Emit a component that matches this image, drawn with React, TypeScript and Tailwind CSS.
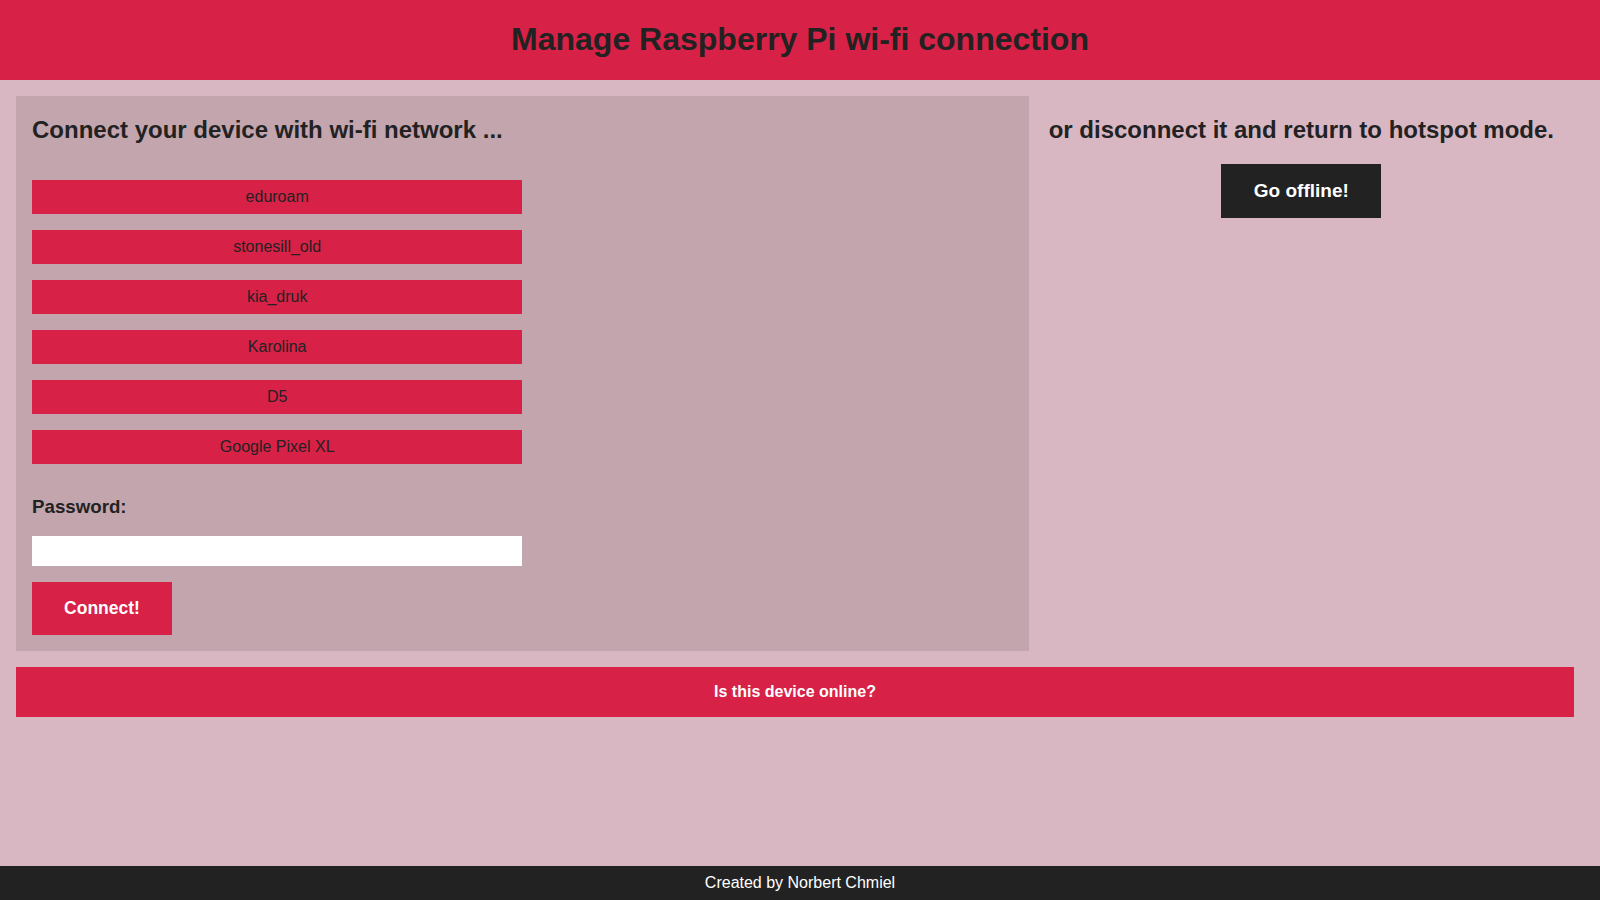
const networks = ['eduroam', 'stonesill_old', 'kia_druk', 'Karolina', 'D5', 'Google Pixel XL']

const App = () => {
    return (
        <div className="flex min-h-screen flex-col bg-[#d9b7c2] font-['Liberation_Sans',Arial,sans-serif] text-[#222222]">
            <header className="flex h-20 items-center justify-center bg-[#d72147] pb-[2px]">
                <h1 className="text-[32px] font-bold leading-none">
                    Manage Raspberry Pi wi-fi connection
                </h1>
            </header>

            <main className="pl-4 pr-[26px] pt-4">
                <div className="flex">
                    <section className="w-[65%] bg-[#c3a5ae] px-4 pb-4 pt-4">
                        <h2 className="text-2xl font-bold leading-[36px]">
                            Connect your device with wi-fi network ...
                        </h2>
                        <div className="mt-8 flex w-1/2 flex-col gap-4">
                            {networks.map((name) => (
                                <button
                                    key={name}
                                    className="h-[34px] w-full bg-[#d72147] text-base text-[#222222]"
                                >
                                    {name}
                                </button>
                            ))}
                        </div>
                        <label className="mt-[31px] block text-[18.72px] font-bold leading-6">
                            Password:
                        </label>
                        <input
                            type="password"
                            className="mt-[17px] block h-[30px] w-1/2 bg-white px-2 outline-none"
                        />
                        <button className="mt-4 h-[53px] w-[140px] bg-[#d72147] text-[17.5px] font-bold text-white">
                            Connect!
                        </button>
                    </section>

                    <section className="flex w-[35%] flex-col items-center pt-4">
                        <h2 className="text-2xl font-bold leading-[36px]">
                            or disconnect it and return to hotspot mode.
                        </h2>
                        <button className="mt-4 h-[54px] w-40 bg-[#222222] text-[19px] font-bold text-white">
                            Go offline!
                        </button>
                    </section>
                </div>

                <button className="mt-4 flex h-[50px] w-full items-center justify-center bg-[#d72147] text-base font-bold text-white">
                    Is this device online?
                </button>
            </main>

            <footer className="mt-auto flex h-[34px] items-center justify-center bg-[#222222] text-base text-white">
                Created by Norbert Chmiel
            </footer>
        </div>
    )
}

export default App
